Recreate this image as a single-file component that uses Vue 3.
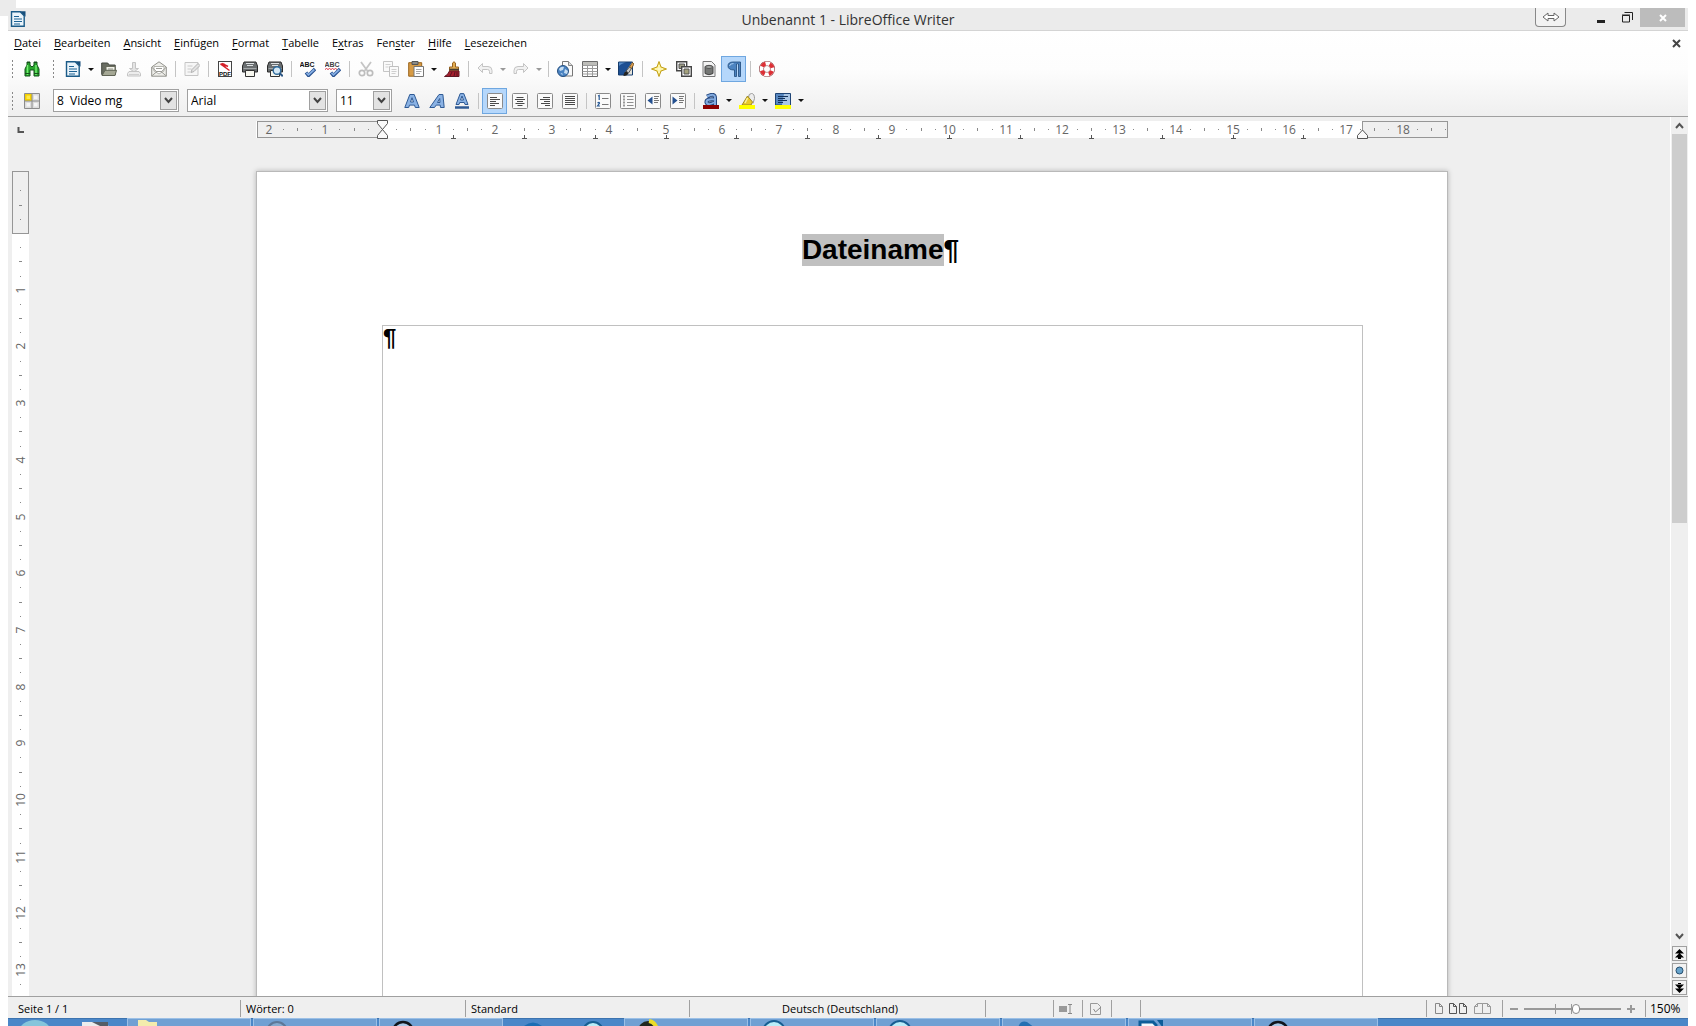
<script setup>
import { computed, onBeforeUnmount, onMounted, ref } from 'vue'

const menus = [
  ['', 'D', 'atei'], ['', 'B', 'earbeiten'], ['', 'A', 'nsicht'], ['', 'E', 'infügen'], ['', 'F', 'ormat'],
  ['', 'T', 'abelle'], ['E', 'x', 'tras'], ['Fen', 's', 'ter'], ['', 'H', 'ilfe'], ['', 'L', 'esezeichen'],
]

const frame = '<rect x=".5" y=".5" width="15" height="15" rx="1" fill="#fafafa" stroke="#8a8a8a"/>'
const printer = '<path d="M2 1h12l1.500 4v6h-15V5z" fill="#6a6e70" stroke="#2b2b2b"/><path d="M4 2.500h8M5 4.500h6" stroke="#dde1e3"/><path d="M1.500 7.500h13" stroke="#a4a8aa"/><path d="M3.500 9.500h9v6h-9z" fill="#f7f7ef" stroke="#333"/>'
const check = '<path d="M6 11.500l2.500 3L15 8" fill="none" stroke="#27508f" stroke-width="3.400"/><path d="M6.500 11.800l2 2L14.300 8.500" fill="none" stroke="#86afe4" stroke-width="1.700"/>'
const page = '<path d="M1.500.8h8.700l4 4v10.400H1.500z" fill="#eaf4fb" stroke="#1b5b88" stroke-width="1.400"/><path d="M10 .2h5.500v5.500z" fill="#174f7c"/><path d="M4 5.500h5M4 8h8M4 10.500h8M4 13h6" stroke="#1d6293" stroke-width="1.200"/>'

const icons = {
  writer: page,
  find: '<path d="M3 1h3v3l1 1.500h2L10 4V1h3v3l2 4v7h-5V9H6v6H1V8l2-4z" fill="#27a52c" stroke="#12521a"/><path d="M3.500 4v10M12 4v10" stroke="#74ee72" stroke-width="1.500"/><path d="M3 1.500h3M10 1.500h3M1 12.500h5M10 12.500h5" stroke="#174f1c"/>',
  new: page,
  open: '<path d="M.7 13.500V2h6l1.500 2h6v10z" fill="#696d62" stroke="#454940"/><path d="M5 5.500h9v7H5z" fill="#f1f2e9" stroke="#6a6d5d"/><path d="M7 8h5" stroke="#92958a"/><path d="M1 14.500l3-5.200h11.500L14 14.500z" fill="#a5a895" stroke="#606455"/>',
  save: '<path d="M6.500 1.500h3v6h3L8 11 3.500 7.500h3z" fill="#e4e4e4" stroke="#c4c4c4"/><path d="M3 10.500h10l1.500 2v2.500h-13v-2.500z" fill="#ededed" stroke="#c4c4c4"/><path d="M3 13.500h10" stroke="#cfcfcf"/>',
  mail: '<path d="M.7 6L8 .8 15.300 6v9.200H.7z" fill="#eeeeea" stroke="#92928c"/><path d="M3 5.500h10V10l-5 3-5-3z" fill="#fff" stroke="#b5b5af"/><path d="M.7 15L6 10.500h4l5.300 4.500M1 6.500l5 4.500M15 6.500L10 11M5 7.500h6" fill="none" stroke="#9d9d97"/>',
  edit: '<path d="M1 1.500h13v13H1z" fill="#f6f6f6" stroke="#c5c5c5"/><path d="M3.500 5h5M3.500 8h4M3.500 11h3" stroke="#cacaca"/><path d="M7 11.500l1-3 6-6 2 2-6 6z" fill="#e2e2e2" stroke="#b3b3b3"/>',
  pdf: '<rect x="1.500" y=".5" width="13" height="15" fill="#fff" stroke="#444"/><path d="M3.500 3l9 6.500M3.500 3h4M3.500 3l5 3M5 2.500l6 3" fill="none" stroke="#d51f28" stroke-width="1.500"/><text x="8" y="14.500" text-anchor="middle" font-size="6" font-weight="700" font-family="Liberation Sans,sans-serif" fill="#111">PDF</text>',
  print: printer,
  preview: printer + '<circle cx="10" cy="9.500" r="3.800" fill="#d5e9f6" stroke="#2e6a9b" stroke-width="1.400"/><path d="M12.800 12.300l3 3" stroke="#2b5684" stroke-width="2"/>',
  spell: '<text x="7" y="6" text-anchor="middle" font-size="7" font-weight="700" font-family="Liberation Sans,sans-serif" fill="#111">ABC</text>' + check,
  autospell: '<text x="7" y="6" text-anchor="middle" font-size="7" font-weight="700" font-family="Liberation Sans,sans-serif" fill="#444">ABC</text><path d="M0 8.500l1.500-1 1.500 1 1.500-1 1.500 1 1.500-1 1.500 1 1.500-1 1.500 1" fill="none" stroke="#dc3542"/>' + check,
  cut: '<path d="M3 1l6.500 9M13 1L6.500 10" stroke="#c5c5c5" stroke-width="1.800"/><circle cx="4" cy="12" r="2.700" fill="none" stroke="#bdbdbd" stroke-width="1.700"/><circle cx="12" cy="12" r="2.700" fill="none" stroke="#bdbdbd" stroke-width="1.700"/>',
  copy: '<path d="M.5.500h9v10h-9z" fill="#fafafa" stroke="#c5c5c5"/><path d="M2.500 3.500h5M2.500 6h3" stroke="#d2d2d2"/><path d="M6.500 5.500h9v10h-9z" fill="#fafafa" stroke="#c0c0c0"/><path d="M8.500 8.500h5M8.500 10.500h5M8.500 12.500h4" stroke="#cfcfcf"/>',
  paste: '<path d="M.7 1.700h13v13.500H.7z" fill="#d79b45" stroke="#9b641c"/><path d="M4 .5h6v3H4z" fill="#8c8c88" stroke="#555"/><path d="M6 5.500h9.500v10H6z" fill="#fff" stroke="#777"/><path d="M8 8.500h5.500M8 10.500h5.500M8 12.500h4" stroke="#a8a8a8"/>',
  brush: '<path d="M8.500 6V2q1.500-2.500 3 0v4h3v4H5.500V6z" fill="#e2ac50" stroke="#976322"/><path d="M5.500 8.500h9.500" stroke="#443d32" stroke-width="1.600"/><path d="M5.500 10H15v5.500H.5Q4 14 5.500 10z" fill="#a61e2c" stroke="#601724"/><path d="M8 11l-2 4M11 11l-1 4M13 11v4" stroke="#5a1421"/>',
  undo: '<path d="M1 7l4.500-4.500V5.500h5.500q4 0 4 4v3h-2.500v-2q0-2-2-2H5.500v3z" fill="#f1f1f1" stroke="#c4c4c4"/>',
  redo: '<path d="M15 7l-4.500-4.500V5.500H5q-4 0-4 4v3h2.500v-2q0-2 2-2h5v3z" fill="#f1f1f1" stroke="#c4c4c4"/>',
  link: '<path d="M5.500.500h6l4 4v10.500h-10z" fill="#fafafa" stroke="#777"/><path d="M11.500.500v4h4" fill="#ddd" stroke="#888"/><circle cx="6" cy="10" r="5.500" fill="#4a83c2" stroke="#27507f"/><path d="M2 8q2-3 5-2l-1 3-3 1zM8 8l3 2-1 3-3-1zM3.500 12l2 .5v2z" fill="#c7def2"/>',
  table: '<path d="M.5.500h15v15H.5z" fill="#fff" stroke="#6b6b6b"/><path d="M1 1h14v3H1z" fill="#bdbdb9"/><path d="M.5 4.500h15M.5 7.500h15M.5 10.500h15M.5 13h15M5.500 4v11M10.500 4v11" stroke="#9b9b9b"/>',
  draw: '<path d="M.5 1h14v13H.5z" fill="#1d4f93" stroke="#163c6c"/><path d="M6 13L14 1.500V13.500H6z" fill="#e6e3da"/><path d="M1 5q4-4 9-3.500V1.500H1z" fill="#5a8fca"/><path d="M5.500 15q0-4 3-5l2 2q-1 3-5 3z" fill="#222"/><path d="M8 10l3.500-4 2 1.500-3 4.500z" fill="#c5c8cb" stroke="#333" stroke-width=".8"/><path d="M11.500 6L14.500 1.500 16 3l-2.500 4.500z" fill="#e2a453" stroke="#6b4a1c" stroke-width=".8"/>',
  star: '<path d="M8 .5l2 5.500 5.500 2L10 10l-2 5.500L6 10 .5 8 6 6z" fill="#fbed79" stroke="#c09d17"/><path d="M8 4v8M4 8h8" stroke="#fffde2"/>',
  gallery: '<path d="M.7.700h10v9H.7z" fill="#fff" stroke="#464646" stroke-width="1.400"/><path d="M3 3h5.500v4.500H3z" fill="#9d9c84" stroke="#555"/><path d="M5.700 5.700h9.600v9.600H5.700z" fill="#fff" stroke="#464646" stroke-width="1.400"/><path d="M8 8h5v5H8z" fill="#a6a37e" stroke="#555"/>',
  data: '<path d="M2 .5h8.500l3.500 3.500v11.500H2z" fill="#f3f3f3" stroke="#777"/><path d="M4 5.500v7q4 2.500 8 0v-7q-4-2.500-8 0z" fill="#747674" stroke="#444"/><ellipse cx="8" cy="6" rx="3.500" ry="1.500" fill="#a3a5a3" stroke="#555"/>',
  pilcrow: '<path d="M7 1h7.500v14.500h-2V3h-2v12.500h-2V9Q2 9 2 5T7 1z" fill="#4d84c1" stroke="#1d4778" stroke-width=".8"/><path d="M11.500 3.500v12" stroke="#b5d7fb"/><path d="M3.500 5Q4 2.500 7.500 2.500" stroke="#a9cdf0" fill="none"/>',
  help: '<circle cx="8" cy="8" r="5.500" fill="none" stroke="#8e3d40" stroke-width="5"/><circle cx="8" cy="8" r="5.500" fill="none" stroke="#fff" stroke-width="3.800"/><circle cx="8" cy="8" r="5.500" fill="none" stroke="#dd3036" stroke-width="3.800" stroke-dasharray="4.320 4.320" stroke-dashoffset="-2.160"/>',
  styles: '<path d="M.5.500h15v15H.5z" fill="#ddd" stroke="#8c8c8c"/><path d="M1 1h7v7H1z" fill="#f4cf00"/><path d="M8 .5v15M.5 8h15" stroke="#8c8c8c"/><path d="M2.500 2.500h3.500v3.500H2.500z" fill="#ffe94b"/><path d="M10 2.500h3.500V6H10zM2.500 10H6v3.500H2.500zM10 10h3.500v3.500H10z" fill="#f5f5f5"/>',
  bold: '<path d="M.8 14.500L5.800 1.500h4.400l5 13h-3.900l-.8-2.400h-5l-.8 2.400zM6.500 9h3L8 4.700z" fill="#8ab2e4" stroke="#2f5a94"/>',
  italic: '<path d="M.8 14.500L10 1.500h3.900l1.300 13h-3.700l-.3-2.400h-4l-1.700 2.400zM8.500 9.500h2.500L10.700 5.500z" fill="#8ab2e4" stroke="#2f5a94"/>',
  underline: '<path d="M2 11.500L6.200.600h3.600L14 11.500h-3l-.7-2H5.700l-.7 2zM6.500 7h3L8 3z" fill="#8ab2e4" stroke="#2f5a94"/><path d="M1 14.500h14" stroke="#2f5a94" stroke-width="2.500"/>',
  left: frame + '<path d="M3 4.500h7M3 6.500h10M3 8.500h6M3 10.500h9M3 12.500h5" stroke="#4a4a4a"/>',
  center: frame + '<path d="M4.500 4.500h7M3 6.500h10M5 8.500h6M3.500 10.500h9M5.500 12.500h5" stroke="#4a4a4a"/>',
  right: frame + '<path d="M6 4.500h7M3 6.500h10M7 8.500h6M4 10.500h9M8 12.500h5" stroke="#4a4a4a"/>',
  justify: frame + '<path d="M3 3.500h10M3 5.500h10M3 7.500h10M3 9.500h10M3 11.500h10" stroke="#4a4a4a"/>',
  numbers: frame + '<path d="M3 3l1.200-.5V7M2.500 10q2-1.500 2 .3L2.500 13H5" fill="none" stroke="#275996" stroke-width="1.200"/><path d="M7 5.500h6.500M7 11.500h6.500" stroke="#777"/>',
  bullets: frame + '<path d="M3 3.500h2M3 6.500h2M3 9.500h2M3 12.500h2" stroke="#9a9a9a" stroke-width="2"/><path d="M7 3.500h6.500M7 6.500h6.500M7 9.500h6.500M7 12.500h6.500" stroke="#8f8f8f"/>',
  outdent: frame + '<path d="M7.500 3.500v8l-5-4z" fill="#24508f"/><path d="M9 3.500h5M9 5.500h4M9 7.500h5M9 9.500h4" stroke="#777"/>',
  indent: frame + '<path d="M2.500 3.500v8l5-4z" fill="#24508f"/><path d="M9 3.500h5M9 5.500h4M9 7.500h5M9 9.500h4" stroke="#777"/>',
  fontcolor: '<path d="M4 3.500Q12-.5 12 5v7M12 6.500Q3 5.500 3.500 9.500 5 13 12 9" fill="none" stroke="#24477d" stroke-width="4"/><path d="M4 3.500Q12-.5 12 5v7M12 6.500Q3 5.500 3.500 9.500 5 13 12 9" fill="none" stroke="#84ace0" stroke-width="2"/><path d="M0 12h16v4H0z" fill="#8b0000"/>',
  highlight: '<path d="M9.500 4.500q0-4 3-4t3 5l-1.500 5" fill="#ededed" stroke="#999"/><path d="M8.500 3L13.500 9 12 12H3z" fill="#e9c92c" stroke="#9c8522"/><path d="M8.500 5L6 10" stroke="#fbf0a0" stroke-width="1.500"/><path d="M0 12h16v4H0z" fill="#ffff00"/>',
  parabg: '<path d="M.5.500h15v11.500H.5z" fill="#5787c0" stroke="#1f4475"/><path d="M9 1h6v11H7z" fill="#a9c6e6"/><path d="M3 3.500h10M3 5.500h7M3 7.500h9M3 9.500h5" stroke="#12315b"/><path d="M0 12h16v4H0z" fill="#ffff00"/>',
}

const arrow = (label, off) => ({ kind: 'arrow', label, off })
const btn = (icon, label, extra) => ({ kind: 'icon', icon, label, ...extra })
const sep = { kind: 'sep' }

const standardBar = [
  btn('new', 'Neu'), arrow('Neu Optionen'), btn('open', 'Öffnen'), btn('save', 'Speichern', { off: true }), btn('mail', 'Als E-Mail senden'), sep,
  btn('edit', 'Bearbeiten', { off: true }), sep, btn('pdf', 'Als PDF exportieren'), btn('print', 'Drucken'), btn('preview', 'Druckvorschau'), sep,
  btn('spell', 'Rechtschreibung'), btn('autospell', 'Automatische Rechtschreibprüfung'), sep,
  btn('cut', 'Ausschneiden', { off: true }), btn('copy', 'Kopieren', { off: true }), btn('paste', 'Einfügen'), arrow('Einfügen Optionen'), btn('brush', 'Format übertragen'), sep,
  btn('undo', 'Rückgängig', { off: true }), arrow('Rückgängig Liste', true), btn('redo', 'Wiederherstellen', { off: true }), arrow('Wiederherstellen Liste', true), sep,
  btn('link', 'Hyperlink'), btn('table', 'Tabelle'), arrow('Tabelle Optionen'), btn('draw', 'Zeichnen'), sep,
  btn('star', 'Navigator'), btn('gallery', 'Gallery'), btn('data', 'Datenquellen'), btn('pilcrow', 'Steuerzeichen', { on: true }), sep, btn('help', 'Hilfe'),
]
const formatBar = [
  btn('bold', 'Fett'), btn('italic', 'Kursiv'), btn('underline', 'Unterstrichen'), sep,
  btn('left', 'Linksbündig', { on: true }), btn('center', 'Zentriert'), btn('right', 'Rechtsbündig'), btn('justify', 'Blocksatz'), sep,
  btn('numbers', 'Nummerierung'), btn('bullets', 'Aufzählung'), btn('outdent', 'Einzug vermindern'), btn('indent', 'Einzug erhöhen'), sep,
  btn('fontcolor', 'Schriftfarbe'), arrow('Schriftfarbe wählen'), btn('highlight', 'Zeichenhintergrund'), arrow('Zeichenhintergrund wählen'),
  btn('parabg', 'Absatzhintergrund'), arrow('Absatzhintergrund wählen'),
]
const combos = [
  { label: 'Absatzvorlage', value: '8\u00a0 Video mg', cls: 'style' },
  { label: 'Schriftart', value: 'Arial', cls: 'family' },
  { label: 'Schriftgröße', value: '11', cls: 'size' },
]

// Pixels per centimetre at 150 % zoom
const CM = 56.7
const ZERO = 126
const V_ZERO = 62
// Height of everything above and below the vertical ruler
const CHROME = 201
const at = (cm, origin) => Math.round(origin + cm * CM)
const marks = (from, to, origin) => {
  const out = []
  for (let q = from; q <= to; q++) {
    if (q === 0) continue
    out.push({ pos: at(q / 4, origin), label: q % 4 === 0 ? Math.abs(q / 4) : null, half: q % 2 === 0 })
  }
  return out
}
const hMarks = marks(-8, 75, ZERO)
const tabs = Array.from({ length: 13 }, (_, i) => at((i + 1) * 1.25, ZERO))

const rulerHeight = ref(0)
const measure = () => { rulerHeight.value = Math.max(0, window.innerHeight - CHROME) }
measure()
onMounted(() => window.addEventListener('resize', measure))
onBeforeUnmount(() => window.removeEventListener('resize', measure))
const vMarks = computed(() => marks(-3, Math.floor(((rulerHeight.value - V_ZERO - 8) / CM) * 4), V_ZERO))

const zoom = ref(54)

const tasks = [
  { kind: 'folder' }, { kind: 'ring' }, { kind: 'dark' }, { kind: 'pinned' },
  { kind: 'bee' }, { kind: 'globe' }, { kind: 'globe' }, { kind: 'bird' }, { kind: 'doc' }, { kind: 'dark' },
]
const taskIcons = {
  folder: '<path d="M2 1h8l3 2h8v6H2z" fill="#f3ecad"/>',
  ring: '<circle cx="15" cy="13" r="10" fill="#85a9ce" stroke="#5c7898" stroke-width="2"/>',
  dark: '<circle cx="15" cy="13" r="10" fill="#a9c8e8" stroke="#10151c" stroke-width="2.500"/>',
  bee: '<circle cx="15" cy="12" r="10" fill="#20281f"/><path d="M16 2q6 1 8 8" fill="none" stroke="#ecdc27" stroke-width="4"/>',
  globe: '<circle cx="15" cy="13" r="11" fill="#b9edf9" stroke="#175e92" stroke-width="2"/>',
  bird: '<path d="M7 9Q9 1 16 3l8 6z" fill="#236fb2"/>',
  doc: '<path d="M3 9V3h13l3 3v3" fill="#f2f8fc" stroke="#0d5d99" stroke-width="3"/><path d="M20 1h6v8z" fill="#0d5d99"/>',
}
</script>

<template>
  <div class="screen">
    <div class="window">
      <header class="titlebar">
        <svg class="app-icon" width="16" height="16" viewBox="0 0 16 16" v-html="icons.writer"></svg>
        <h1>Unbenannt 1 - LibreOffice Writer</h1>
        <div class="controls">
          <button class="swap" aria-label="Bildschirm wechseln">
            <svg width="18" height="10" viewBox="0 0 18 10"><path d="M1 5l5-4v2.500h6V1l5 4-5 4V6.500H6V9z" fill="#fff" stroke="#666" /></svg>
          </button>
          <button class="min" aria-label="Minimieren"><svg width="8" height="12"><path d="M0 10.500h8" stroke="#222" stroke-width="3" /></svg></button>
          <button class="restore" aria-label="Wiederherstellen">
            <svg width="11" height="11"><path d="M2.500 0.500h8v7.500" fill="none" stroke="#222" /><path d="M.5 3.500h7v6.500h-7zM0 3h8" fill="none" stroke="#222" /></svg>
          </button>
          <button class="close" aria-label="Schließen"><svg width="8" height="8"><path d="M1 1l6 6M7 1L1 7" stroke="#fff" stroke-width="2" /></svg></button>
        </div>
      </header>

      <div class="bars">
        <nav class="menubar">
          <button v-for="m in menus" :key="m.join('')">{{ m[0] }}<u>{{ m[1] }}</u>{{ m[2] }}</button>
          <button class="doc-close" aria-label="Dokument schließen"><svg width="9" height="9"><path d="M1 1l7 7M8 1L1 8" stroke="#444" stroke-width="2" /></svg></button>
        </nav>

        <div class="toolbar standard">
          <i class="handle"></i>
          <button class="tool find" aria-label="Suchen"><svg width="16" height="16" viewBox="0 0 16 16" v-html="icons.find"></svg></button>
          <i class="handle"></i>
          <template v-for="(t, i) in standardBar" :key="i">
            <i v-if="t.kind === 'sep'" class="sep"></i>
            <button v-else-if="t.kind === 'arrow'" class="arrow" :class="{ off: t.off }" :aria-label="t.label"></button>
            <button v-else class="tool" :class="{ on: t.on }" :disabled="t.off" :aria-label="t.label">
              <svg width="16" height="16" viewBox="0 0 16 16" v-html="icons[t.icon]"></svg>
            </button>
          </template>
        </div>

        <div class="toolbar format">
          <i class="handle"></i>
          <button class="tool" aria-label="Formatvorlagen"><svg width="16" height="16" viewBox="0 0 16 16" v-html="icons.styles"></svg></button>
          <div class="combos">
            <div v-for="c in combos" :key="c.cls" class="combo" :class="c.cls">
              <select :aria-label="c.label"><option>{{ c.value }}</option></select>
              <span class="drop"><svg width="9" height="7"><path d="M1 1l3.500 4L8 1" fill="none" stroke="#444" stroke-width="2" /></svg></span>
            </div>
          </div>
          <template v-for="(t, i) in formatBar" :key="i">
            <i v-if="t.kind === 'sep'" class="sep"></i>
            <button v-else-if="t.kind === 'arrow'" class="arrow" :aria-label="t.label"></button>
            <button v-else class="tool" :class="{ on: t.on }" :aria-label="t.label">
              <svg width="16" height="16" viewBox="0 0 16 16" v-html="icons[t.icon]"></svg>
            </button>
          </template>
        </div>
      </div>

      <main class="work">
        <div class="left-col">
          <div class="corner"><svg width="7" height="7"><path d="M1.500 0v5H7" fill="none" stroke="#555" stroke-width="2" /></svg></div>
          <svg class="vruler" width="17" :height="rulerHeight">
            <rect width="17" height="100%" fill="#fff" />
            <rect x=".5" y=".5" width="16" height="62" fill="#efefef" stroke="#969696" />
            <template v-for="m in vMarks" :key="m.pos">
              <text v-if="m.label" :transform="`translate(13 ${m.pos}) rotate(-90)`" text-anchor="middle">{{ m.label }}</text>
              <rect v-else :x="m.half ? 7 : 8" :y="m.pos" :width="m.half ? 3 : 1" height="1" fill="#888" />
            </template>
          </svg>
        </div>

        <div class="canvas">
          <svg class="hruler" width="1192" height="20">
            <rect y="1" width="1192" height="17" fill="#fff" />
            <rect x="1.500" y="1.500" width="125" height="16" fill="#efefef" stroke="#969696" />
            <rect x="1106.500" y="1.500" width="85" height="16" fill="#efefef" stroke="#969696" />
            <template v-for="m in hMarks" :key="m.pos">
              <text v-if="m.label" :x="m.pos" y="14" text-anchor="middle">{{ m.label }}</text>
              <rect v-else :x="m.pos" :y="m.half ? 8 : 9" width="1" :height="m.half ? 3 : 1" fill="#888" />
            </template>
            <path v-for="t in tabs" :key="t" :d="`M${t - 2} 18.500h5M${t + 0.5} 15v3`" stroke="#555" />
            <path d="M121.500.5h10v3l-5 6 5 6v3h-10v-3l5-6-5-6z" fill="#fafafa" stroke="#555" />
            <path d="M1106.500 10l5 5.500v3h-10v-3z" fill="#fafafa" stroke="#555" />
          </svg>
          <article class="paper">
            <h2><span>Dateiname</span>¶</h2>
            <div class="body-frame"><p>¶</p></div>
          </article>
        </div>

        <div class="scrollbar">
          <button class="step" aria-label="Nach oben"><svg width="9" height="7"><path d="M1 6l3.500-4L8 6" fill="none" stroke="#555" stroke-width="2" /></svg></button>
          <div class="track"><div class="thumb"></div></div>
          <button class="step" aria-label="Nach unten"><svg width="9" height="7"><path d="M1 1l3.500 4L8 1" fill="none" stroke="#555" stroke-width="2" /></svg></button>
          <button class="jump" aria-label="Vorherige Seite"><svg width="9" height="10"><path d="M4.500 0L9 4.500H0zM4.500 4L9 8.500H0zM3 8h3v2H3z" /></svg></button>
          <button class="jump" aria-label="Navigation"><svg width="9" height="9"><circle cx="4.500" cy="4.500" r="3.500" fill="#68a4cb" stroke="#274e6e" /></svg></button>
          <button class="jump" aria-label="Nächste Seite"><svg width="9" height="10"><path d="M4.500 10L9 5.500H0zM4.500 6L9 1.500H0zM3 0h3v2H3z" /></svg></button>
        </div>
      </main>

      <footer class="status">
        <span class="pages">Seite 1 / 1</span>
        <span class="words">Wörter: 0</span>
        <span class="template">Standard</span>
        <span class="lang">Deutsch (Deutschland)</span>
        <span class="insert"></span>
        <span class="cell"><svg width="13" height="12"><path d="M0 3h8v6H0z" fill="#999" /><path d="M9 1.500h4M9 10.500h4M11 1v9" stroke="#888" fill="none" /></svg></span>
        <span class="cell wide"><svg width="12" height="12"><path d="M.5.500h7l3 3v8H.5z" fill="none" stroke="#999" /><path d="M3.500 6l2 3L11 4" fill="none" stroke="#888" /></svg></span>
        <span class="cell"></span>
        <span class="spacer"></span>
        <span class="views">
          <button aria-label="Einzelne Seite"><svg width="8" height="11"><path d="M.5.500h4l3 3v7h-7zM4.500.500v3h3" fill="none" stroke="#888" /></svg></button>
          <button aria-label="Mehrere Seiten"><svg width="19" height="11"><path d="M.5.500h4l3 3v7h-7zM4.500.500v3h3M10.500.500h4l3 3v7h-7zM14.500.500v3h3" fill="none" stroke="#555" /></svg></button>
          <button aria-label="Buchansicht"><svg width="17" height="11"><path d="M8.500.500h-5l-3 3v7h8zM3.500.500v3h-3M8.500.500h5l3 3v7h-8zM13.500.500v3h3" fill="none" stroke="#999" /></svg></button>
        </span>
        <span class="zoomer">
          <button aria-label="Verkleinern"><svg width="8" height="8"><path d="M0 4h8" stroke="#999" stroke-width="2" /></svg></button>
          <input v-model="zoom" type="range" min="0" max="100" aria-label="Zoomfaktor" />
          <button aria-label="Vergrößern"><svg width="8" height="8"><path d="M0 4h8M4 0v8" stroke="#999" stroke-width="2" /></svg></button>
        </span>
        <span class="percent">150%</span>
      </footer>

      <div class="taskbar">
        <svg class="start" width="119" height="8">
          <ellipse cx="27" cy="14" rx="16" ry="12" fill="#85c5db" />
          <path d="M74 8V4h19l8 4z" fill="#eceded" /><path d="M84 4h16v4H92z" fill="#555d66" />
        </svg>
        <template v-for="(t, i) in tasks" :key="i">
          <svg v-if="t.kind === 'pinned'" class="pinned" width="117" height="8">
            <path d="M19 8q9-7 18 0z" fill="#1b6db4" /><circle cx="88" cy="14" r="10" fill="#b9edf9" stroke="#175e92" stroke-width="2" />
          </svg>
          <button v-else class="task" :aria-label="`Fenster ${i + 1}`"><svg width="28" height="8" viewBox="0 0 28 8" v-html="taskIcons[t.kind]"></svg></button>
        </template>
      </div>
    </div>
  </div>
</template>

<style>
body { background: #fff; }
</style>

<style scoped>
.screen {
  box-sizing: border-box;
  height: 100vh;
  padding: 8px 8px 0;
  background: linear-gradient(#ebebeb, #ebebeb) 0 0 / 16px 16px no-repeat #fff;
  font: 11px/16px "Open Sans", "Noto Sans", sans-serif;
  color: #000;
}
.window { display: flex; flex-direction: column; height: 100%; background: #efefef; overflow: hidden; }
button { display: flex; align-items: center; justify-content: center; padding: 0; border: 0; background: none; font: inherit; color: inherit; }
svg { display: block; flex: none; }

.titlebar { display: grid; grid-template-columns: 1fr auto 1fr; height: 22px; background: #ebebeb; border-bottom: 1px solid #d4d4d4; }
.app-icon { margin: 3px 0 0 2px; }
h1 { margin: 0; font-size: 14px; line-height: 24px; font-weight: 400; color: #333; }
.controls { display: flex; justify-content: flex-end; align-items: flex-start; padding-right: 3px; }
.swap { width: 31px; height: 19px; margin-right: 22px; border: 1px solid #888; border-top: 0; border-radius: 0 0 4px 4px; background: #f2f2f2; }
.min, .restore { width: 26px; height: 18px; }
.close { width: 45px; height: 19px; background: #bcbcbc; }

.bars { background: linear-gradient(#fff, #fdfdfd 45%, #efefef); border-bottom: 1px solid #a0a0a0; }
.menubar { display: flex; align-items: center; gap: 13px; height: 24px; padding: 0 7px 0 6px; }
.menubar u { text-underline-offset: 2px; }
.doc-close { margin-left: auto; }

.toolbar { display: flex; align-items: center; box-sizing: border-box; }
.standard { height: 28px; }
.format { height: 33px; padding-top: 2px; }
.handle { flex: none; width: 11px; height: 20px; background: radial-gradient(circle, #888 1px, transparent 1px) 3px 0 / 3px 4px repeat-y; }
.tool { flex: none; box-sizing: border-box; width: 25px; height: 26px; }
.tool.on { border: 1px solid #6fa7e0; background: #b5d7fb; }
.find { margin-right: 5px; }
.sep { flex: none; width: 1px; height: 16px; margin: 0 3px 0 4px; background: #c4c4c4; }
.arrow { flex: none; width: 11px; height: 26px; }
.arrow::after { content: ""; border: 3px solid transparent; border-top-color: #111; border-bottom: 0; }
.arrow.off::after { border-top-color: #999; }

.combos { display: flex; gap: 8px; margin: 0 7px 0 9px; }
.combo { position: relative; }
.combo select { display: block; box-sizing: border-box; width: 100%; height: 23px; padding: 0 20px 0 3px; border: 1px solid #a0a0a0; border-radius: 0; appearance: none; background: #fff; font: inherit; font-size: 12px; color: #000; }
.drop { position: absolute; top: 2px; right: 2px; bottom: 2px; display: grid; place-items: center; box-sizing: border-box; width: 17px; border: 1px solid #a0a0a0; background: #e3e3e3; pointer-events: none; }
.style { width: 126px; }
.family { width: 141px; }
.size { width: 56px; }

.work { flex: 1; display: flex; min-height: 0; overflow: hidden; }
.left-col { flex: none; padding-left: 4px; }
.corner { height: 54px; box-sizing: border-box; padding: 10px 0 0 5px; }
.vruler text, .hruler text { font: 12px "Open Sans", "Noto Sans", sans-serif; fill: #666; }
.canvas { flex: 1; display: flex; flex-direction: column; align-items: center; min-width: 0; padding: 3px 0 0 5px; overflow: hidden; }
.hruler { margin-bottom: 31px; }
.paper { flex: none; box-sizing: border-box; width: 1192px; height: 1684px; padding: 62px 84px 0 125px; border: 1px solid #b9b9b9; background: #fff; box-shadow: 0 0 5px rgba(0, 0, 0, 0.25); color: #000; font-family: "Liberation Sans", Arial, sans-serif; font-weight: 700; }
h2 { margin: 0 0 59px; padding-left: 16px; text-align: center; font-size: 28px; line-height: 32px; }
h2 span { display: inline-block; background: #c0c0c0; }
.body-frame { height: 1300px; border: 1px solid #c0c0c0; }
.body-frame p { margin: 0; font-size: 24px; line-height: 24px; }

.scrollbar { flex: none; display: flex; flex-direction: column; gap: 2px; box-sizing: border-box; width: 18px; padding: 0 1px 1px; border-left: 1px solid #fff; }
.step { height: 15px; }
.step:first-child { padding-top: 2px; }
.track { flex: 1; }
.thumb { height: 49%; background: #cdcdcd; }
.jump { box-sizing: border-box; height: 15px; border: 1px solid #a0a0a0; background: #f2f2f2; }

.status { flex: none; display: flex; align-items: center; height: 19px; padding-top: 2px; border-top: 1px solid #a0a0a0; }
.status > span { display: flex; align-items: center; box-sizing: border-box; height: 17px; }
.status > span + span { border-left: 1px solid #a0a0a0; padding-left: 5px; }
.pages { width: 232px; padding-left: 10px; }
.words { width: 225px; }
.template { width: 224px; }
.lang { width: 296px; justify-content: center; }
.insert { width: 68px; }
.cell { width: 29px; }
.status .wide { padding-left: 7px; }
.spacer { flex: 1; }
.status .views { width: 76px; gap: 6px; padding-left: 8px; }
.status .zoomer { width: 143px; padding-left: 7px; gap: 6px; }
.zoomer input { width: 97px; height: 12px; margin: 0; appearance: none; background: linear-gradient(#999, #999) 31px 1px / 1px 10px no-repeat, linear-gradient(#999, #999) 47px 1px / 1px 10px no-repeat, linear-gradient(#999, #999) 0 5px / 100% 2px no-repeat; }
.zoomer input::-webkit-slider-thumb { appearance: none; box-sizing: border-box; width: 8px; height: 10px; border: 1px solid #888; border-radius: 4px; background: #fff; }
.status .percent { width: 43px; padding-left: 4px; font-size: 12px; }

.taskbar { flex: none; display: flex; gap: 2px; height: 8px; background: #4a87c8; overflow: hidden; box-shadow: inset 0 1px #3d74b0; }
.task { flex: none; box-sizing: border-box; width: 124px; height: 10px; justify-content: flex-start; align-items: flex-start; padding-left: 8px; border: 1px solid #9cc0e6; background: #70a0d3; }
.start { margin-right: -2px; }
</style>
